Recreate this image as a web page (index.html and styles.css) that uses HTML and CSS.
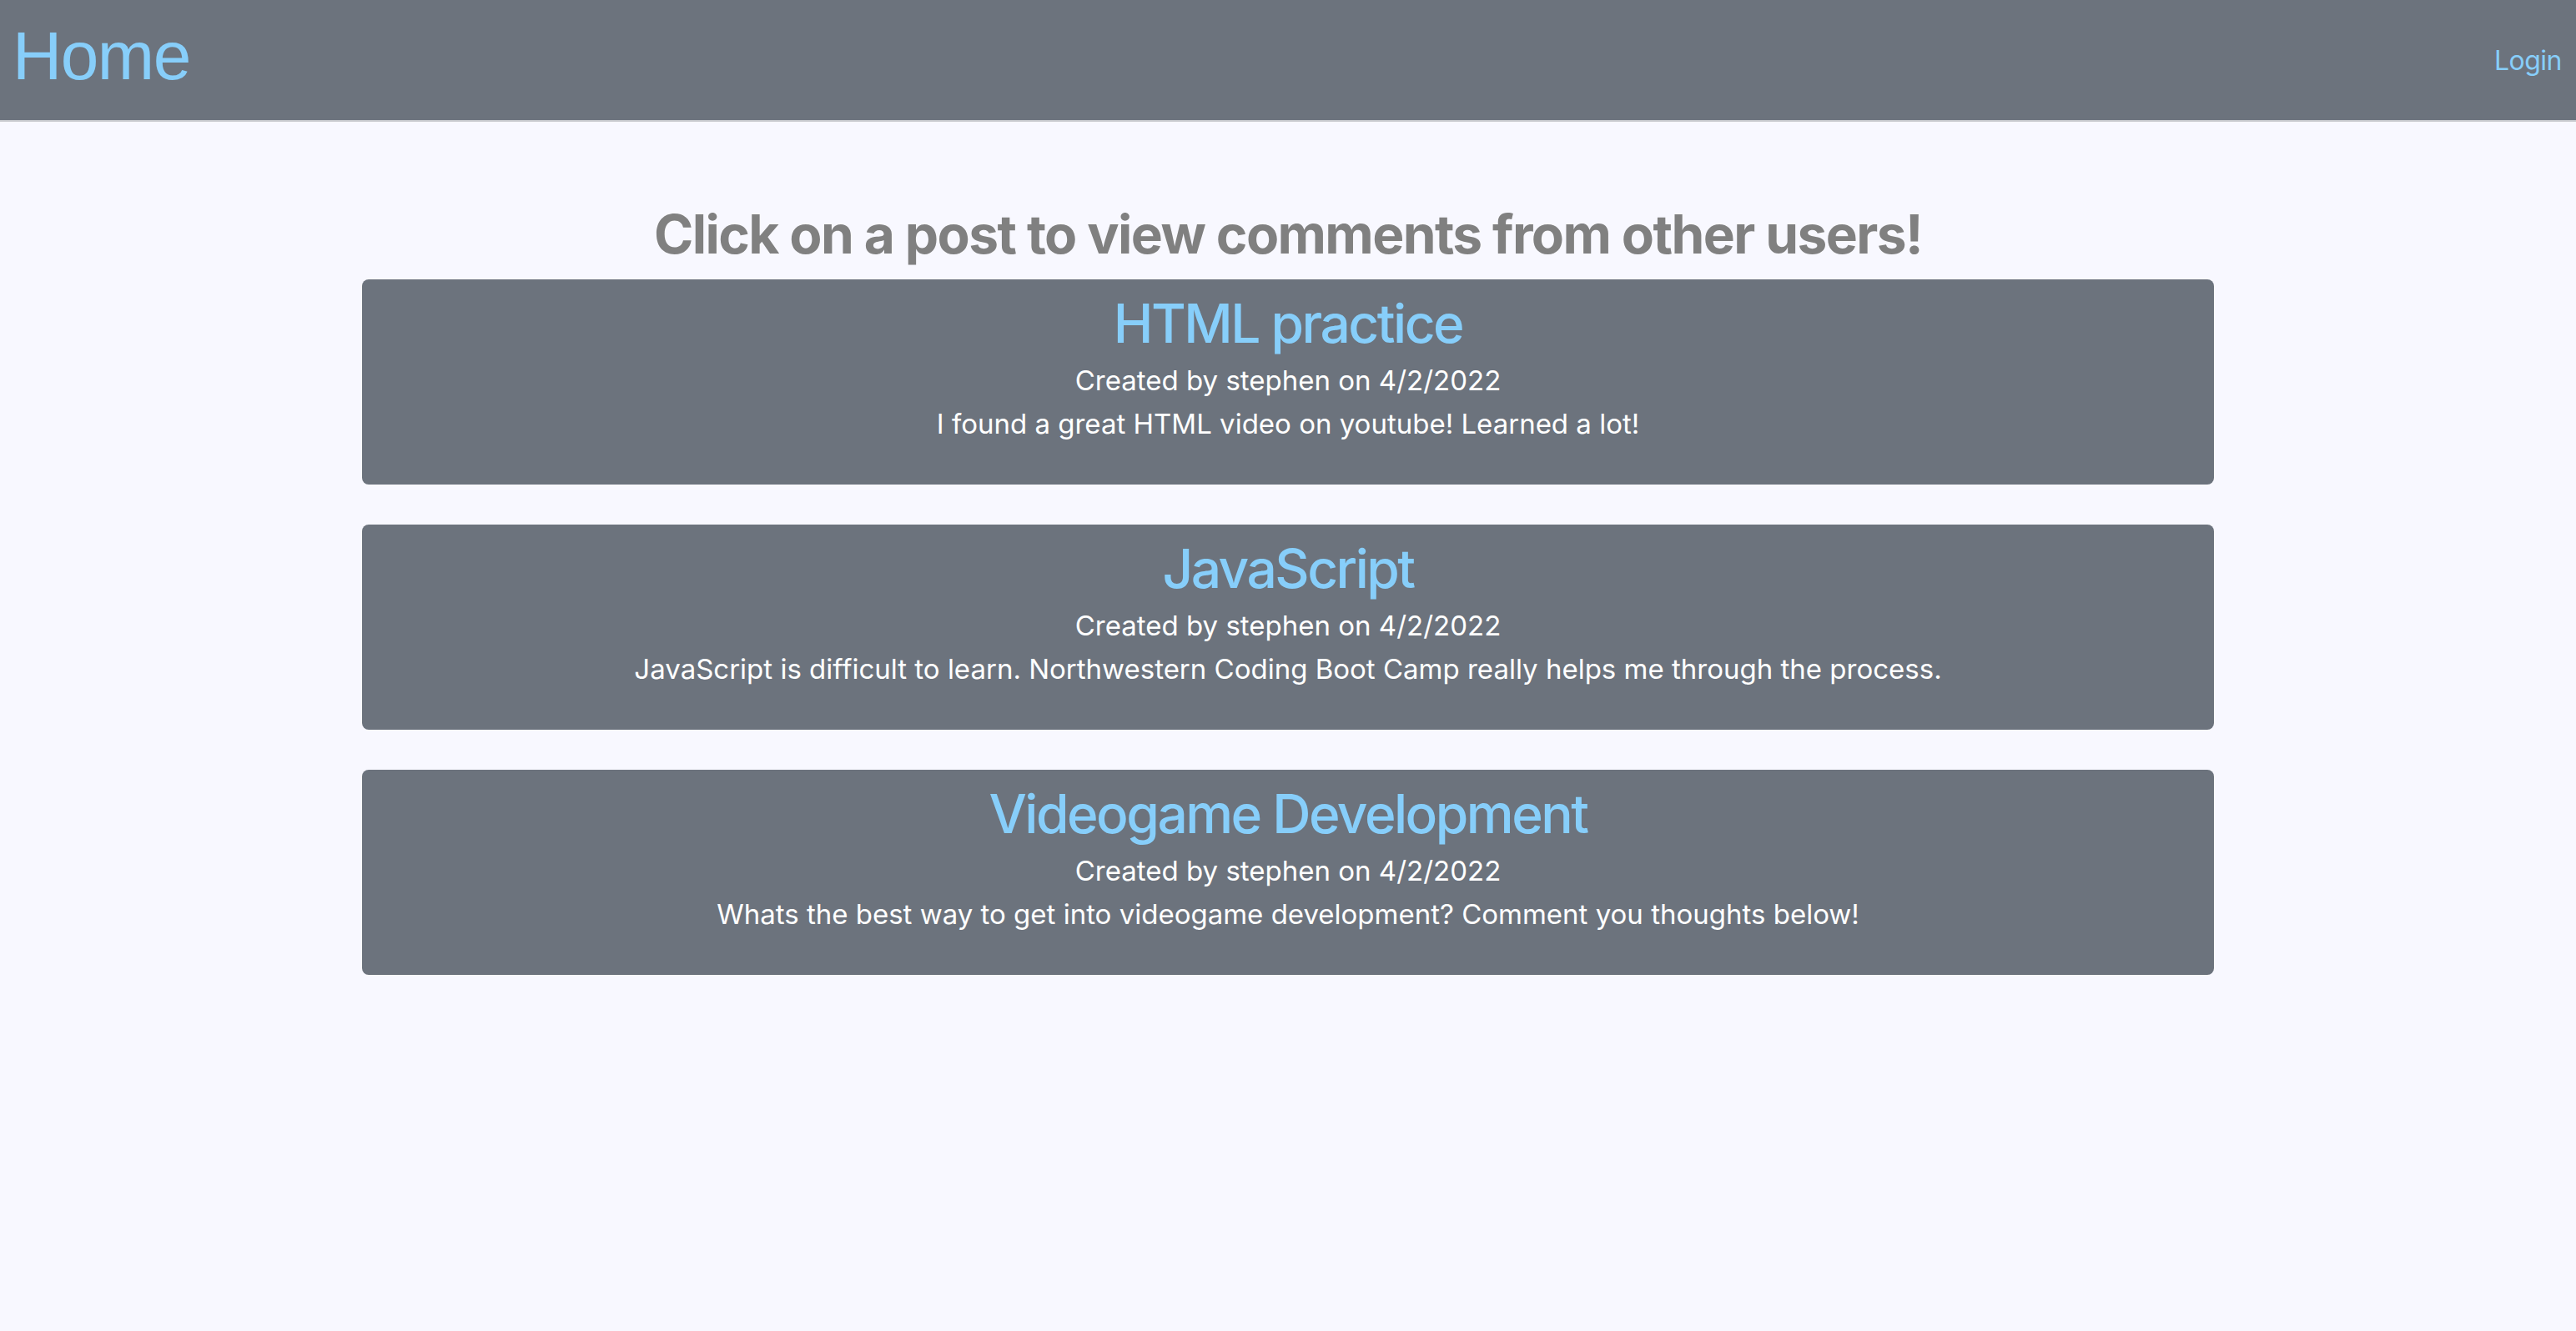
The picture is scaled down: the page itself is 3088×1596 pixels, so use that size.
FILE: index.html
```html
<!DOCTYPE html>
<html lang="en">
<head>
<meta charset="utf-8">
<title>Home</title>
<link rel="stylesheet" href="styles.css">
</head>
<body>
<header class="topbar">
  <a class="brand" href="#">Home</a>
  <nav class="nav"><a class="nav-link" href="#">Login</a></nav>
</header>
<main class="content">
  <h2 class="page-title">Click on a post to view comments from other users!</h2>
  <section class="posts">
    <article class="post">
      <h2 class="post-title">HTML practice</h2>
      <p class="post-meta">Created by stephen on 4/2/2022</p>
      <p class="post-body">I found a great HTML video on youtube! Learned a lot!</p>
    </article>
    <article class="post">
      <h2 class="post-title">JavaScript</h2>
      <p class="post-meta">Created by stephen on 4/2/2022</p>
      <p class="post-body">JavaScript is difficult to learn. Northwestern Coding Boot Camp really helps me through the process.</p>
    </article>
    <article class="post">
      <h2 class="post-title">Videogame Development</h2>
      <p class="post-meta">Created by stephen on 4/2/2022</p>
      <p class="post-body">Whats the best way to get into videogame development? Comment you thoughts below!</p>
    </article>
  </section>
</main>
</body>
</html>
```

FILE: styles.css
```css
html, body {
  margin: 0;
  padding: 0;
}
body {
  background: #f8f8ff;
  font-family: Inter, "Noto Sans", sans-serif;
  min-height: 1596px;
}
a {
  text-decoration: none;
}
.topbar {
  display: flex;
  justify-content: space-between;
  align-items: flex-start;
  height: 144px;
  background: #6c737d;
  border-bottom: 2px solid #c9cbcf;
  padding: 0 17px 0 15px;
}
.brand {
  margin-top: 20px;
  font-family: "Liberation Sans", Arial, sans-serif;
  font-size: 82px;
  line-height: normal;
  letter-spacing: -1.5px;
  color: #87cefa;
}
.nav {
  margin-top: 53px;
}
.nav-link {
  font-size: 32px;
  line-height: normal;
  letter-spacing: -0.5px;
  color: #87cefa;
}
.content {
  width: 2220px;
  margin: 0 auto;
  padding-top: 96px;
}
.page-title {
  margin: 0 0 16px;
  text-align: center;
  font-size: 64px;
  font-weight: 700;
  line-height: 77px;
  color: #808080;
  letter-spacing: -1.6px;
}
.posts {
  display: flex;
  flex-direction: column;
  gap: 48px;
}
.post {
  background: #6c737d;
  border-radius: 8px;
  padding: 15px 20px 47px;
  text-align: center;
  color: #ffffff;
}
.post-title {
  margin: 0 0 4px;
  font-size: 64px;
  font-weight: 500;
  line-height: 76px;
  letter-spacing: -2.5px;
  color: #87cefa;
}
.post-meta,
.post-body {
  margin: 0;
  font-size: 33px;
  line-height: 52px;
}
```
